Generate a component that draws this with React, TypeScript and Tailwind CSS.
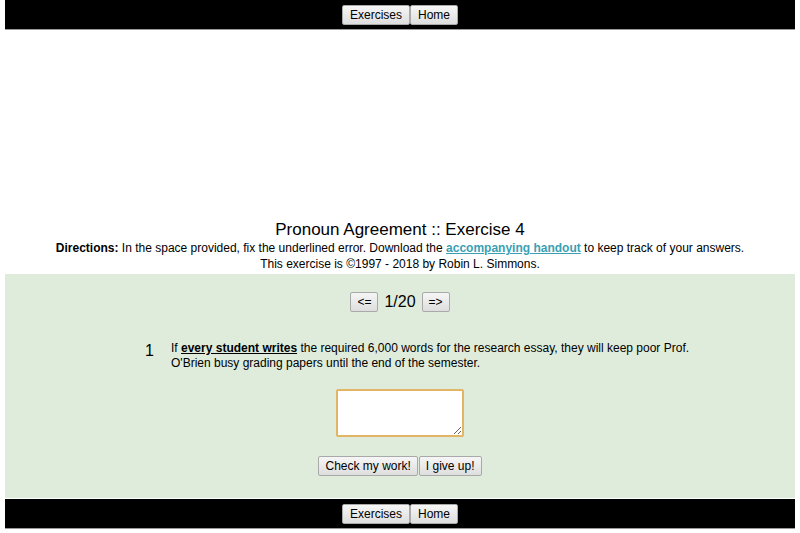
import React from 'react';

const btn =
  'h-[20px] px-[6px] text-[12px] leading-none text-black bg-gradient-to-b from-[#f6f6f6] to-[#dedede] border border-[#a9a9a9] rounded-[2px]';

function NavBar() {
  return (
    <div className="h-[30px] bg-black border-b border-[#9a9a9a] flex items-center justify-center">
      <button className={btn + ' px-[7px] text-[12.5px]'}>Exercises</button>
      <button className={btn + ' px-[7px] text-[12.5px]'}>Home</button>
    </div>
  );
}

export default function App() {
  return (
    <div className="w-[800px] h-[533px] bg-white px-[5px] font-['Liberation_Sans',Arial,sans-serif] text-black">
      <NavBar />

      {/* ad space */}
      <div className="h-[188px]" />

      <div className="text-center">
        <h1 className="text-[17px] leading-[21px] pt-[1px] font-normal">Pronoun Agreement :: Exercise 4</h1>
        <p className="text-[12px] leading-[16px]">
          <b>Directions:</b> In the space provided, fix the underlined error. Download the{' '}
          <a className="font-bold text-[#3a9fb5] underline">accompanying handout</a> to keep track of your answers.
        </p>
        <p className="text-[12px] leading-[16px]">This exercise is ©1997 - 2018 by Robin L. Simmons.</p>
      </div>

      <div className="mt-[2px] h-[224px] bg-[#dfecdc] flex flex-col items-center pt-[18px]">
        <div className="flex items-center gap-[6px] h-[20px]">
          <button className={btn + ' w-[28px] px-0'}>&lt;=</button>
          <span className="text-[16px] leading-[20px]">1/20</span>
          <button className={btn + ' w-[28px] px-0'}>=&gt;</button>
        </div>

        <div className="mt-[29px] w-full flex pl-[140px]">
          <span className="w-[26px] text-[16px] leading-[18px] pt-[1px]">1</span>
          <p className="text-[12px] leading-[15px] w-[525px]">
            If <b className="underline">every student writes</b> the required 6,000 words for the research essay, they will keep poor Prof. O'Brien busy grading papers until the end of the semester.
          </p>
        </div>

        <textarea
          className="mt-[18px] w-[128px] h-[48px] bg-white border-2 border-[#e2b466] rounded-[2px] outline-none resize"
          defaultValue=""
        />

        <div className="mt-[19px] flex gap-[1px]">
          <button className={btn}>Check my work!</button>
          <button className={btn}>I give up!</button>
        </div>
      </div>

      <div className="mt-[1px]">
        <NavBar />
      </div>
    </div>
  );
}
